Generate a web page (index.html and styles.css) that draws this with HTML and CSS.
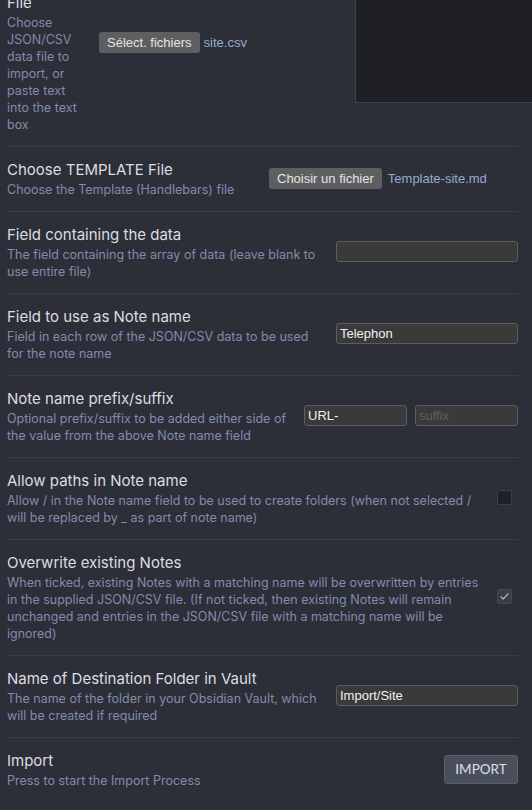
FILE: index.html
```html
<!DOCTYPE html>
<html lang="en">
<head>
    <meta charset="UTF-8">
    <meta name="viewport" content="width=device-width, initial-scale=1.0">
    <title>Import JSON/CSV</title>
    <link rel="stylesheet" href="styles.css">
</head>
<body>
    <div class="ajustes">
        <div class="setting-item primero">
            <div class="setting-info estrecho">
                <div class="setting-name">File</div>
                <div class="setting-desc">Choose JSON/CSV data file to import, or paste text into the text box</div>
            </div>
            <div class="setting-control archivo-control">
                <span class="file-input primero-input">
                    <span class="file-btn">Sélect. fichiers</span>
                    <span class="file-name">site.csv</span>
                </span>
                <textarea class="datos"></textarea>
            </div>
        </div>

        <div class="setting-item">
            <div class="setting-info">
                <div class="setting-name">Choose TEMPLATE File</div>
                <div class="setting-desc">Choose the Template (Handlebars) file</div>
            </div>
            <div class="setting-control">
                <span class="file-input ancho">
                    <span class="file-btn">Choisir un fichier</span>
                    <span class="file-name">Template-site.md</span>
                </span>
            </div>
        </div>

        <div class="setting-item">
            <div class="setting-info">
                <div class="setting-name">Field containing the data</div>
                <div class="setting-desc">The field containing the array of data (leave blank to use entire file)</div>
            </div>
            <div class="setting-control">
                <input type="text" class="campo">
            </div>
        </div>

        <div class="setting-item">
            <div class="setting-info">
                <div class="setting-name">Field to use as Note name</div>
                <div class="setting-desc">Field in each row of the JSON/CSV data to be used for the note name</div>
            </div>
            <div class="setting-control">
                <input type="text" class="campo" value="Telephon">
            </div>
        </div>

        <div class="setting-item">
            <div class="setting-info">
                <div class="setting-name">Note name prefix/suffix</div>
                <div class="setting-desc">Optional prefix/suffix to be added either side of the value from the above Note name field</div>
            </div>
            <div class="setting-control">
                <input type="text" class="campo corto" value="URL-">
                <input type="text" class="campo corto" placeholder="suffix">
            </div>
        </div>

        <div class="setting-item">
            <div class="setting-info">
                <div class="setting-name">Allow paths in Note name</div>
                <div class="setting-desc">Allow / in the Note name field to be used to create folders (when not selected / will be replaced by _ as part of note name)</div>
            </div>
            <div class="setting-control">
                <span class="casilla"></span>
            </div>
        </div>

        <div class="setting-item">
            <div class="setting-info">
                <div class="setting-name">Overwrite existing Notes</div>
                <div class="setting-desc">When ticked, existing Notes with a matching name will be overwritten by entries in the supplied JSON/CSV file. (If not ticked, then existing Notes will remain unchanged and entries in the JSON/CSV file with a matching name will be ignored)</div>
            </div>
            <div class="setting-control">
                <span class="casilla marcada">
                    <svg viewBox="0 0 16 16" width="11" height="11"><path d="M3 8.5l3 3 7-7" fill="none" stroke="#a9adb7" stroke-width="2" stroke-linecap="round" stroke-linejoin="round"/></svg>
                </span>
            </div>
        </div>

        <div class="setting-item">
            <div class="setting-info">
                <div class="setting-name">Name of Destination Folder in Vault</div>
                <div class="setting-desc">The name of the folder in your Obsidian Vault, which will be created if required</div>
            </div>
            <div class="setting-control">
                <input type="text" class="campo" value="Import/Site">
            </div>
        </div>

        <div class="setting-item">
            <div class="setting-info">
                <div class="setting-name">Import</div>
                <div class="setting-desc">Press to start the Import Process</div>
            </div>
            <div class="setting-control">
                <button class="importar">IMPORT</button>
            </div>
        </div>
    </div>
</body>
</html>
```

FILE: styles.css
```css
html, body {
    margin: 0;
    padding: 0;
    background-color: #2c2f38;
    overflow: hidden;
}

body {
    font-family: "Inter", "Noto Sans", sans-serif;
}

.ajustes {
    margin-top: -20px;
    padding-left: 7px;
    width: 511px;
}

.setting-item {
    display: flex;
    align-items: center;
    padding: 11px 0 13px;
    border-top: 1px solid #3a3d47;
}

.setting-item.primero {
    border-top: none;
    align-items: flex-start;
}

.setting-info {
    flex: 1 1 auto;
    margin-right: 16px;
}

.setting-info.estrecho {
    flex: 0 0 82px;
    margin-right: 10px;
}

.setting-name {
    font-size: 15px;
    line-height: 23px;
    color: #dcdde0;
}

.setting-desc {
    font-size: 12.5px;
    line-height: 17px;
    color: #818cab;
}

.setting-control {
    flex: 0 0 auto;
    display: flex;
    align-items: center;
    gap: 8px;
}

.archivo-control {
    align-items: flex-start;
    gap: 0;
}

.file-input {
    display: flex;
    align-items: center;
    gap: 5px;
}

.primero-input {
    margin-top: 41px;
    gap: 4px;
}

.file-input.ancho {
    width: 249px;
    gap: 6px;
}

.file-btn {
    display: inline-block;
    background-color: #5e5f61;
    color: #e4e4e4;
    font-family: "Liberation Sans", Arial, sans-serif;
    font-size: 13px;
    line-height: 21px;
    padding: 0 8px;
    border-radius: 3px;
}

.file-name {
    font-family: "Liberation Sans", Arial, sans-serif;
    font-size: 13px;
    color: #97abd0;
}

.datos {
    margin-left: 108px;
    width: 190px;
    height: 110px;
    background-color: #1f2026;
    border: 1px solid #3e4049;
    resize: none;
    padding: 0;
}

.campo {
    box-sizing: border-box;
    width: 182px;
    height: 21px;
    padding: 0 3px;
    background-color: #3a3a3b;
    border: 1px solid #5c5d60;
    border-radius: 3px;
    color: #f0f0f0;
    font-family: "Liberation Sans", Arial, sans-serif;
    font-size: 13px;
}

.campo::placeholder {
    color: #5f6066;
}

.campo.corto {
    width: 103px;
}

.casilla {
    display: flex;
    align-items: center;
    justify-content: center;
    box-sizing: border-box;
    width: 15px;
    height: 15px;
    margin-right: 6px;
    background-color: #1f2026;
    border: 1px solid #3c3f48;
    border-radius: 2px;
}

.casilla.marcada {
    background-color: #3a3d46;
    border-color: #454852;
}

.importar {
    width: 74px;
    height: 29px;
    background-color: #4a4f5c;
    border: 1px solid #5b606d;
    border-radius: 3px;
    color: #dfe0e4;
    font-family: "Lato", "Noto Sans", sans-serif;
    font-size: 13.5px;
    padding: 0;
}
```
